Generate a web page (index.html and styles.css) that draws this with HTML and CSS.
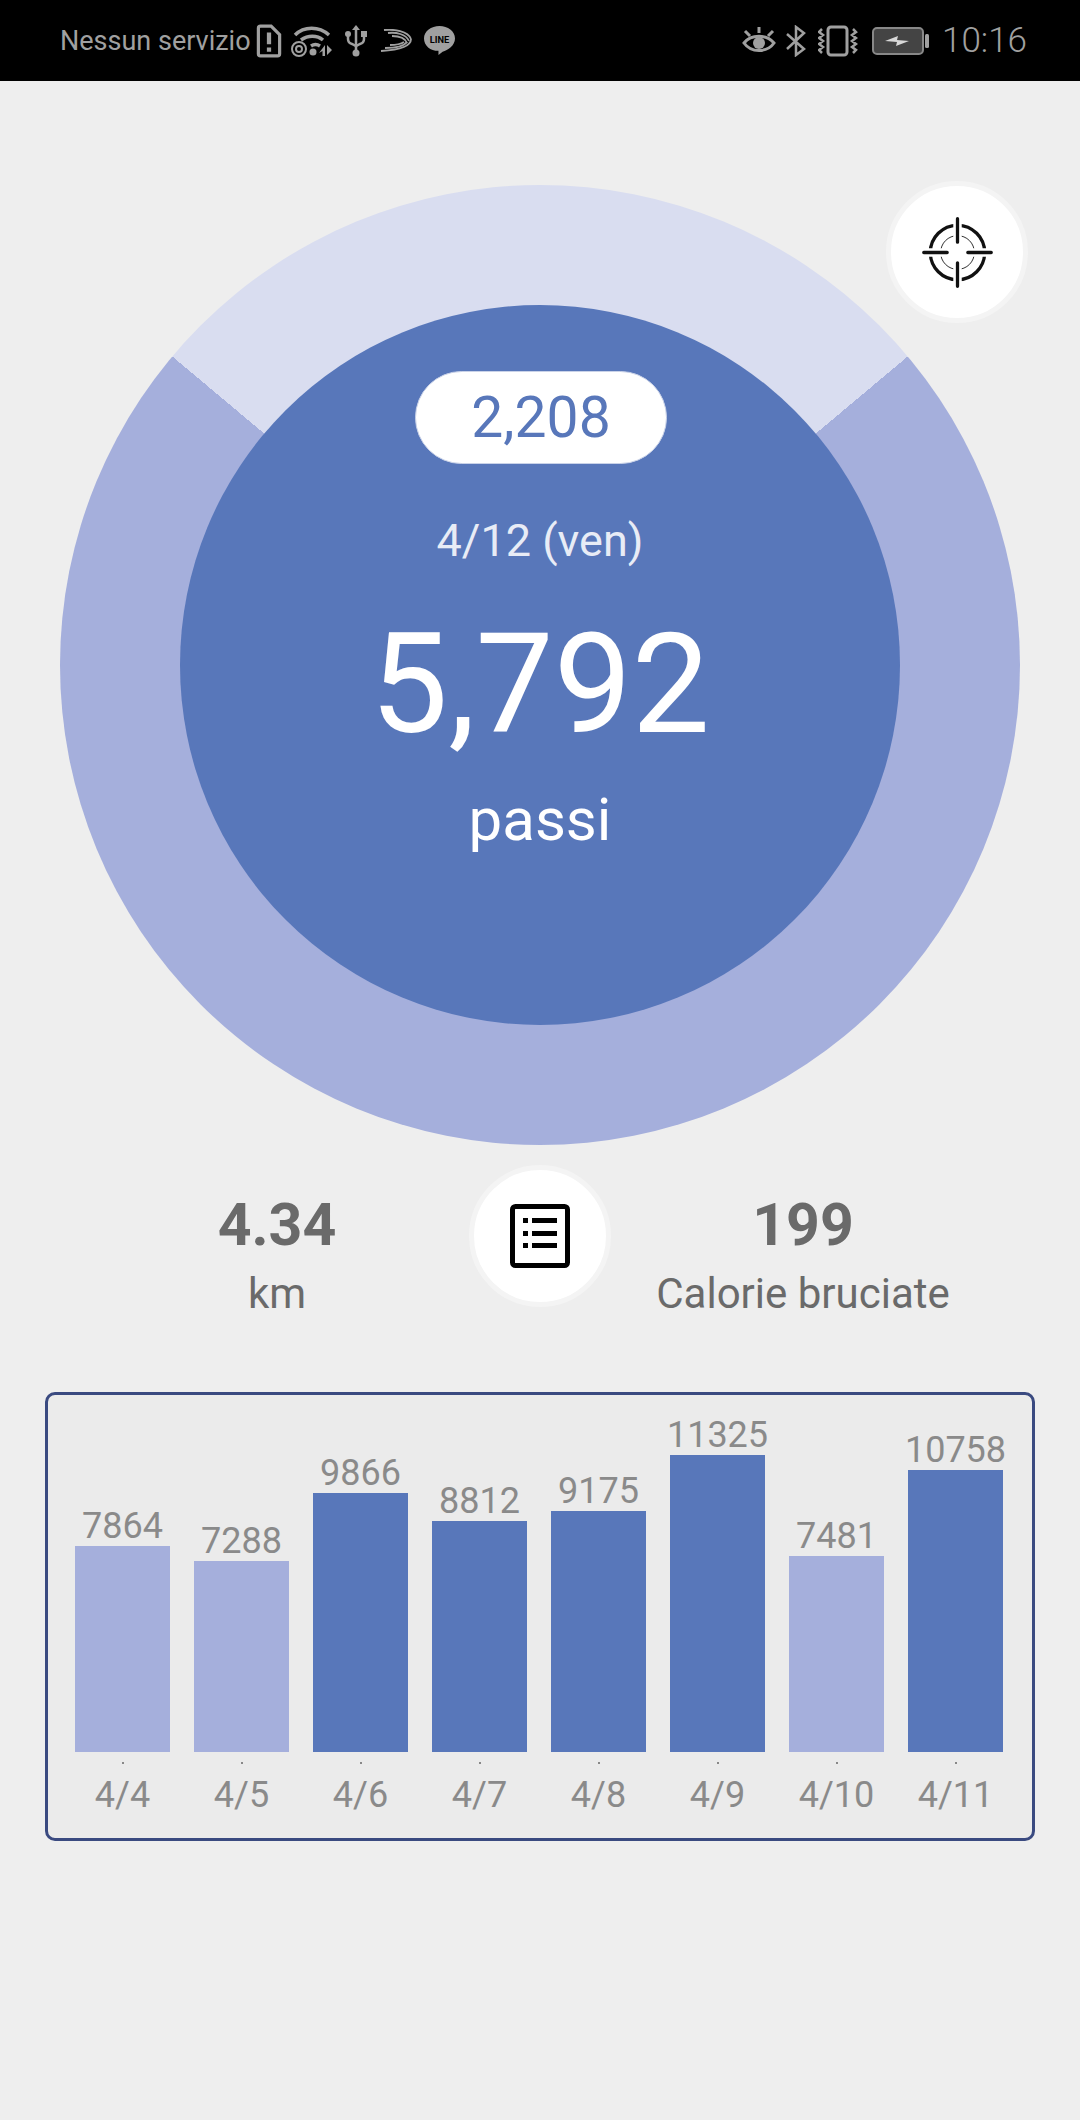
FILE: index.html
```html
<!DOCTYPE html>
<html lang="it">
<head>
  <meta charset="UTF-8">
  <meta name="viewport" content="width=device-width, initial-scale=1.0">
  <title>Passi</title>
  <link rel="stylesheet" href="styles.css">
</head>
<body>
  <div class="status-bar">
    <div class="status-left">
      <span class="carrier">Nessun servizio</span>
      <svg class="icon-sim" width="26" height="34" viewBox="0 0 24 32">
        <path d="M4 2h10l8 8v18a2 2 0 0 1-2 2H4a2 2 0 0 1-2-2V4a2 2 0 0 1 2-2z" fill="none" stroke="#a0a0a0" stroke-width="3"/>
        <path d="M12 8v11M12 22v4" stroke="#a0a0a0" stroke-width="4" fill="none"/>
      </svg>
      <svg class="icon-wifi" width="42" height="32" viewBox="0 0 42 32">
        <g fill="none" stroke="#a0a0a0" stroke-width="3.5">
          <path d="M5 10C14 1 29 1 39 10"/>
          <path d="M11 15c7-5 16-5 22 0"/>
          <path d="M21 21c3-2 6-2 9 0"/>
          <circle cx="9" cy="24" r="7" stroke-width="2"/>
          <circle cx="9" cy="24" r="3" stroke-width="2"/>
        </g>
        <circle cx="23" cy="27" r="3.5" fill="#a0a0a0"/>
        <path d="M35 20v11h-2.500v-5l-3.500 2zM37 20l5 5-5 5z" fill="#a0a0a0"/>
      </svg>
      <svg class="icon-usb" width="22" height="32" viewBox="0 0 22 32">
        <g fill="none" stroke="#a0a0a0" stroke-width="2.5">
          <path d="M11 3v26"/>
          <path d="M3 9v5q0 4 4 5l4 2 4-2q4-1 4-5V9"/>
        </g>
        <path d="M11 0l4 5H7z" fill="#a0a0a0"/>
        <circle cx="11" cy="28" r="3.500" fill="#a0a0a0"/>
        <circle cx="3" cy="9" r="3" fill="#a0a0a0"/>
        <rect x="16" y="6" width="6" height="6" fill="#a0a0a0"/>
      </svg>
      <svg class="icon-swift" width="32" height="24" viewBox="0 0 32 24">
        <g fill="none" stroke="#a0a0a0" stroke-width="1.8">
          <path d="M4 1c10-1 24 1 27 9"/>
          <path d="M8 4c8-1 18 1 21 8"/>
          <path d="M12 7c7 0 13 2 15 7"/>
          <path d="M31 10c0 7-12 11-30 12"/>
          <path d="M27 13c-3 4-12 6-22 6"/>
          <path d="M24 13c-3 2-8 3-14 3"/>
        </g>
      </svg>
      <svg class="icon-line" width="31" height="31" viewBox="0 0 30 30">
        <path d="M15 1c8 0 15 5 15 12 0 7-7 11-12 13l-4 3v-4C6 25 0 20 0 13 0 6 7 1 15 1z" fill="#a0a0a0"/>
        <text x="15" y="17" class="line-text" text-anchor="middle">LINE</text>
      </svg>
    </div>
    <div class="status-right">
      <svg class="icon-eye" width="34" height="32" viewBox="0 0 34 32">
        <path d="M2 18C9 9 25 9 32 18 25 28 9 28 2 18z" fill="none" stroke="#a0a0a0" stroke-width="3"/>
        <circle cx="17" cy="18" r="6" fill="#a0a0a0"/>
        <path d="M3 6l5 5M17 2v6M31 6l-5 5" stroke="#a0a0a0" stroke-width="3" fill="none"/>
      </svg>
      <svg class="icon-bt" width="20" height="32" viewBox="0 0 20 32">
        <path d="M1 9l17 15-8 6V2l8 6L1 24" fill="none" stroke="#a0a0a0" stroke-width="2.5"/>
      </svg>
      <svg class="icon-vibrate" width="40" height="32" viewBox="0 0 40 32">
        <rect x="10" y="2" width="19" height="28" rx="3" fill="none" stroke="#a0a0a0" stroke-width="3"/>
        <path d="M4 4l-3 3 4 3-4 3 4 3-4 3 4 3-4 3 3 3M35 4l3 3-4 3 4 3-4 3 4 3-4 3 4 3-3 3" fill="none" stroke="#a0a0a0" stroke-width="2.5"/>
      </svg>
      <svg class="icon-battery" width="58" height="28" viewBox="0 0 58 28">
        <rect x="1" y="1" width="50" height="26" rx="4" fill="#444" stroke="#888" stroke-width="2"/>
        <rect x="53" y="7" width="4" height="14" rx="1.500" fill="#a0a0a0"/>
        <path d="M13 14l13-5-1 4 12 1-13 5 1-4z" fill="#d8d8d8"/>
      </svg>
      <span class="clock">10:16</span>
    </div>
  </div>

  <div class="page">
    <div class="dial">
      <div class="dial-center">
        <div class="goal-pill">2,208</div>
        <div class="dial-date">4/12 (ven)</div>
        <div class="dial-steps">5,792</div>
        <div class="dial-unit">passi</div>
      </div>
      <div class="round-btn target-btn">
        <svg width="75" height="75" viewBox="0 0 80 80">
          <circle cx="40" cy="40" r="29" fill="none" stroke="#111" stroke-width="3.5"/>
          <circle cx="40" cy="40" r="18" fill="none" stroke="#222" stroke-width="1"/>
          <path d="M40 4v25M40 51v25M4 40h25M51 40h25" stroke="#fff" stroke-width="9"/>
          <path d="M40 4v25M40 51v25M4 40h25M51 40h25" stroke="#111" stroke-width="3.5" stroke-linecap="round"/>
        </svg>
      </div>
    </div>

    <div class="stats">
      <div class="stat">
        <div class="stat-num">4.34</div>
        <div class="stat-label">km</div>
      </div>
      <div class="round-btn">
        <svg width="60" height="64" viewBox="0 0 60 64">
          <rect x="2.5" y="2.5" width="55" height="59" rx="3" fill="none" stroke="#000" stroke-width="5"/>
          <path d="M13 14h5v5h-5zM13 27h5v5h-5zM13 39h5v5h-5z" fill="#000"/>
          <path d="M22 14h25v5H22zM22 27h25v5H22zM22 39h25v5H22z" fill="#000"/>
        </svg>
      </div>
      <div class="stat">
        <div class="stat-num">199</div>
        <div class="stat-label">Calorie bruciate</div>
      </div>
    </div>

    <div class="chart">
      <div class="day">
        <span class="day-value">7864</span>
        <div class="bar bar-low" style="height: 206px"></div>
        <span class="tick"></span>
        <span class="day-label">4/4</span>
      </div>
      <div class="day">
        <span class="day-value">7288</span>
        <div class="bar bar-low" style="height: 191px"></div>
        <span class="tick"></span>
        <span class="day-label">4/5</span>
      </div>
      <div class="day">
        <span class="day-value">9866</span>
        <div class="bar" style="height: 259px"></div>
        <span class="tick"></span>
        <span class="day-label">4/6</span>
      </div>
      <div class="day">
        <span class="day-value">8812</span>
        <div class="bar" style="height: 231px"></div>
        <span class="tick"></span>
        <span class="day-label">4/7</span>
      </div>
      <div class="day">
        <span class="day-value">9175</span>
        <div class="bar" style="height: 241px"></div>
        <span class="tick"></span>
        <span class="day-label">4/8</span>
      </div>
      <div class="day">
        <span class="day-value">11325</span>
        <div class="bar" style="height: 297px"></div>
        <span class="tick"></span>
        <span class="day-label">4/9</span>
      </div>
      <div class="day">
        <span class="day-value">7481</span>
        <div class="bar bar-low" style="height: 196px"></div>
        <span class="tick"></span>
        <span class="day-label">4/10</span>
      </div>
      <div class="day">
        <span class="day-value">10758</span>
        <div class="bar" style="height: 282px"></div>
        <span class="tick"></span>
        <span class="day-label">4/11</span>
      </div>
    </div>
  </div>
</body>
</html>
```

FILE: styles.css
```css
body {
  margin: 0;
  height: 2120px;
  overflow: hidden;
  font-family: Roboto, "Liberation Sans", sans-serif;
  background: #eeeeee;
}

/* status bar */
.status-bar {
  height: 81px;
  background: #000;
  color: #a0a0a0;
  display: flex;
  justify-content: space-between;
  align-items: center;
  padding: 0 53px 0 60px;
}
.status-left,
.status-right {
  display: flex;
  align-items: center;
}
.carrier {
  font-size: 27px;
  margin-right: 5px;
}
.icon-wifi { margin-left: 8px; }
.icon-usb { margin-left: 13px; }
.icon-swift { margin-left: 13px; }
.icon-line { margin-left: 12px; }
.line-text {
  font-size: 9px;
  font-weight: 700;
  fill: #000;
}
.icon-bt { margin-left: 10px; }
.icon-vibrate { margin-left: 12px; }
.icon-battery { margin-left: 14px; }
.clock {
  font-size: 35px;
  font-weight: 300;
  margin-left: 12px;
}

/* dial */
.dial {
  position: relative;
  width: 960px;
  height: 960px;
  margin: 104px auto 0;
  border-radius: 50%;
  background: conic-gradient(from -50deg, #d9ddf0 0 100deg, #a5afdc 100deg 360deg);
  display: flex;
  align-items: center;
  justify-content: center;
}
.dial-center {
  width: 720px;
  height: 720px;
  border-radius: 50%;
  background: #5877ba;
  color: #fff;
  display: flex;
  flex-direction: column;
  align-items: center;
}
.goal-pill {
  box-sizing: border-box;
  margin: 66px 0 0 2px;
  width: 252px;
  height: 93px;
  border-radius: 47px;
  border: 1px solid #c9d2e8;
  background: #fff;
  color: #5877ba;
  font-size: 57px;
  line-height: 92px;
  text-align: center;
}
.dial-date {
  margin-top: 49px;
  font-size: 45px;
  line-height: 56px;
  color: #e8ecf6;
}
.dial-steps {
  margin-top: 36px;
  font-size: 139px;
  line-height: 160px;
}
.dial-unit {
  margin-top: 17px;
  font-size: 60px;
  line-height: 76px;
}

.round-btn {
  width: 132px;
  height: 132px;
  border-radius: 50%;
  background: #fff;
  border: 5px solid #f4f4f4;
  display: flex;
  align-items: center;
  justify-content: center;
}
.target-btn {
  position: absolute;
  top: -4px;
  left: 826px;
}

/* stats */
.stats {
  margin-top: 5px;
  display: flex;
  justify-content: center;
  align-items: center;
  gap: 22px;
}
.stat {
  width: 340px;
  padding-top: 41px;
  text-align: center;
  color: #6a6a6a;
}
.stat-num {
  font-size: 59px;
  font-weight: 700;
  line-height: 68px;
}
.stat-label {
  margin-top: 7px;
  font-size: 42px;
  line-height: 56px;
}

/* chart */
.chart {
  box-sizing: border-box;
  width: 990px;
  height: 449px;
  margin: 70px 0 0 45px;
  padding: 0 27px 22px 27px;
  background: #ebebeb;
  border: 3px solid #3a4a80;
  border-radius: 10px;
  display: flex;
  align-items: flex-end;
  gap: 24px;
}
.day {
  width: 95px;
  display: flex;
  flex-direction: column;
  align-items: center;
}
.day-value {
  font-size: 36px;
  line-height: 40px;
  color: #8a8a8a;
}
.bar {
  width: 95px;
  background: #5877ba;
}
.bar-low {
  background: #a5afdc;
}
.tick {
  width: 2px;
  height: 2px;
  margin-top: 10px;
  background: #888;
}
.day-label {
  margin-top: 10px;
  font-size: 36px;
  line-height: 42px;
  color: #8a8a8a;
}
```
